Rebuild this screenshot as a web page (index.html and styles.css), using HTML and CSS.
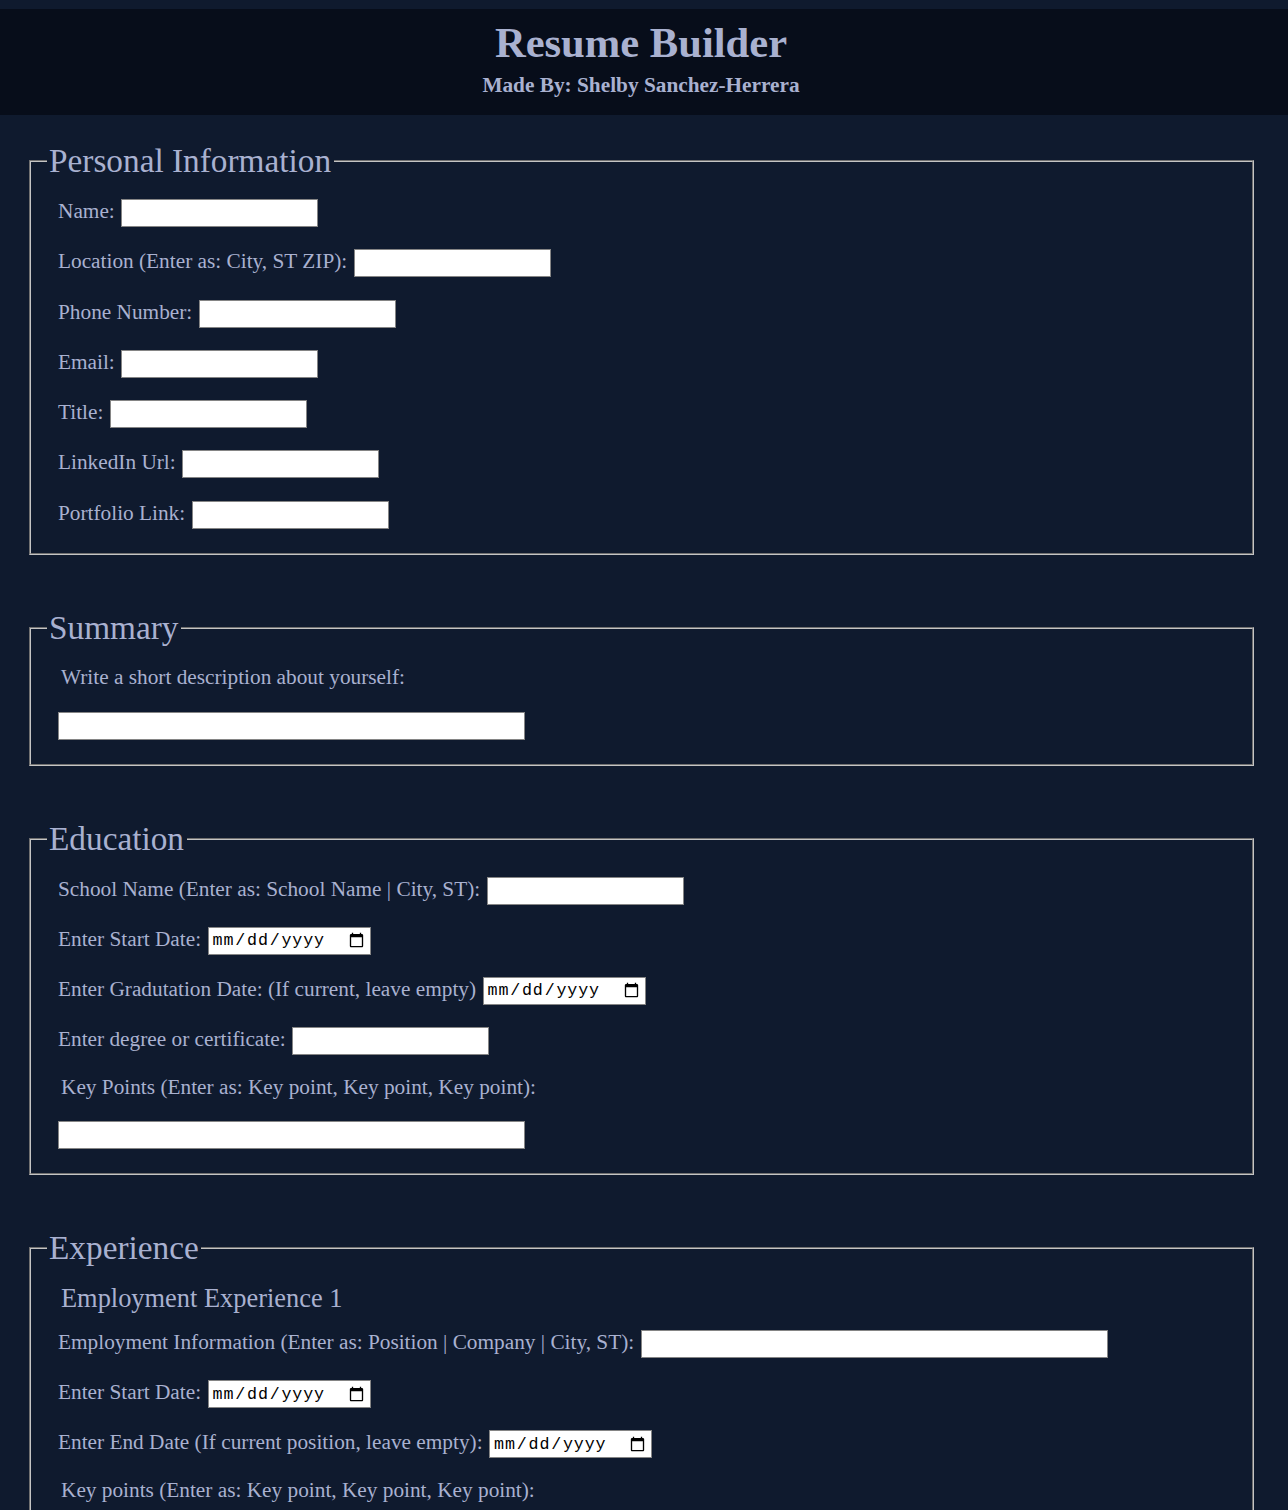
FILE: index.html
```html
<!DOCTYPE html>
<html lang="en">
<head>
<meta charset="utf-8">
<title>Resume Builder</title>
<link rel="stylesheet" href="styles.css">
</head>
<body>
<header class="site-header">
  <h1 class="site-title">Resume Builder</h1>
  <h2 class="site-sub">Made By: Shelby Sanchez-Herrera</h2>
</header>
<main class="form">
  <fieldset class="section">
    <legend class="section-title">Personal Information</legend>
    <div class="rows personal">
      <div class="row"><label class="lbl" for="name">Name:</label><input class="text" id="name" type="text"></div>
      <div class="row"><label class="lbl" for="loc">Location (Enter as: City, ST ZIP):</label><input class="text" id="loc" type="text"></div>
      <div class="row"><label class="lbl" for="phone">Phone Number:</label><input class="text" id="phone" type="text"></div>
      <div class="row"><label class="lbl" for="email">Email:</label><input class="text" id="email" type="text"></div>
      <div class="row"><label class="lbl" for="title">Title:</label><input class="text" id="title" type="text"></div>
      <div class="row"><label class="lbl" for="li">LinkedIn Url:</label><input class="text" id="li" type="text"></div>
      <div class="row"><label class="lbl" for="pf">Portfolio Link:</label><input class="text" id="pf" type="text"></div>
    </div>
  </fieldset>

  <fieldset class="section">
    <legend class="section-title">Summary</legend>
    <div class="rows">
      <label class="block-lbl first" for="sum">Write a short description about yourself:</label>
      <input class="text wide" id="sum" type="text">
    </div>
  </fieldset>

  <fieldset class="section">
    <legend class="section-title">Education</legend>
    <div class="rows">
      <div class="row"><label class="lbl" for="school">School Name (Enter as: School Name | City, ST):</label><input class="text" id="school" type="text"></div>
      <div class="row"><label class="lbl" for="es">Enter Start Date:</label><input class="date" id="es" type="date"></div>
      <div class="row"><label class="lbl" for="eg">Enter Gradutation Date: (If current, leave empty)</label><input class="date" id="eg" type="date"></div>
      <div class="row"><label class="lbl" for="deg">Enter degree or certificate:</label><input class="text" id="deg" type="text"></div>
      <label class="block-lbl" for="ekp">Key Points (Enter as: Key point, Key point, Key point):</label>
      <input class="text wide" id="ekp" type="text">
    </div>
  </fieldset>

  <fieldset class="section">
    <legend class="section-title">Experience</legend>
    <div class="rows">
      <h3 class="sub-title">Employment Experience 1</h3>
      <div class="row"><label class="lbl" for="emp">Employment Information (Enter as: Position | Company | City, ST):</label><input class="text wide" id="emp" type="text"></div>
      <div class="row"><label class="lbl" for="xs">Enter Start Date:</label><input class="date" id="xs" type="date"></div>
      <div class="row"><label class="lbl" for="xe">Enter End Date (If current position, leave empty):</label><input class="date" id="xe" type="date"></div>
      <label class="block-lbl" for="xkp">Key points (Enter as: Key point, Key point, Key point):</label>
      <input class="text wide" id="xkp" type="text">
    </div>
  </fieldset>
</main>
</body>
</html>
```

FILE: styles.css
```css
html, body {
  margin: 0;
  padding: 0;
  background: #0f1a2e;
}

body {
  font-family: "Liberation Serif", "Times New Roman", serif;
  color: #a9b1d0;
  padding-top: 9px;
}

.site-header {
  background: #070d1a;
  text-align: center;
  padding: 10px 6px 18px 0;
}

.site-title {
  margin: 0;
  font-size: 42.6px;
  line-height: 48px;
  font-weight: bold;
  color: #a9b1d0;
}

.site-sub {
  margin: 6px 0 0;
  font-size: 21.3px;
  line-height: 24px;
  font-weight: bold;
  color: #a9b1d0;
}

.form {
  padding-top: 27px;
}

.section {
  margin: 0 34px 54px 29px;
  padding: 0 16px 0 15.5px;
  border: 2px groove #c4c4c4;
  min-width: 0;
}

.section-title {
  font-size: 33.3px;
  line-height: 38px;
  padding: 0 2.5px;
  color: #a9b1d0;
}

.rows {
  padding: 19px 0 24px 11.5px;
  display: flex;
  flex-direction: column;
  align-items: flex-start;
}

.row {
  display: flex;
  align-items: center;
  column-gap: 6.5px;
  height: 28px;
  margin-bottom: 22px;
}

.personal .row {
  margin-bottom: 22.3px;
}

.row:last-child,
.personal .row:last-child {
  margin-bottom: 0;
}

.lbl {
  font-size: 21.3px;
  line-height: 24px;
  margin-bottom: 4px;
  white-space: nowrap;
}

.block-lbl {
  font-size: 21.3px;
  line-height: 24px;
  padding-left: 3px;
  margin-top: -2px;
  margin-bottom: 22.5px;
}

.block-lbl.first {
  margin-top: -0.5px;
}

.sub-title {
  margin: -3px 0 17px;
  padding-left: 3px;
  font-size: 26.4px;
  line-height: 30px;
  font-weight: normal;
}

.text {
  box-sizing: border-box;
  width: 197px;
  height: 28px;
  margin: 0;
  padding: 1px 3px;
  border: 1px solid #858585;
  background: #ffffff;
  font-family: "Liberation Mono", monospace;
  font-size: 16.7px;
}

.text.wide {
  width: 467px;
}

.date {
  box-sizing: border-box;
  width: 163px;
  height: 28px;
  margin: 0;
  padding: 1px 3px;
  border: 1px solid #858585;
  background: #ffffff;
  color: #000000;
  font-family: "Liberation Mono", "DejaVu Sans Mono", monospace;
  font-size: 16.7px;
  letter-spacing: 0.8px;
}
```
